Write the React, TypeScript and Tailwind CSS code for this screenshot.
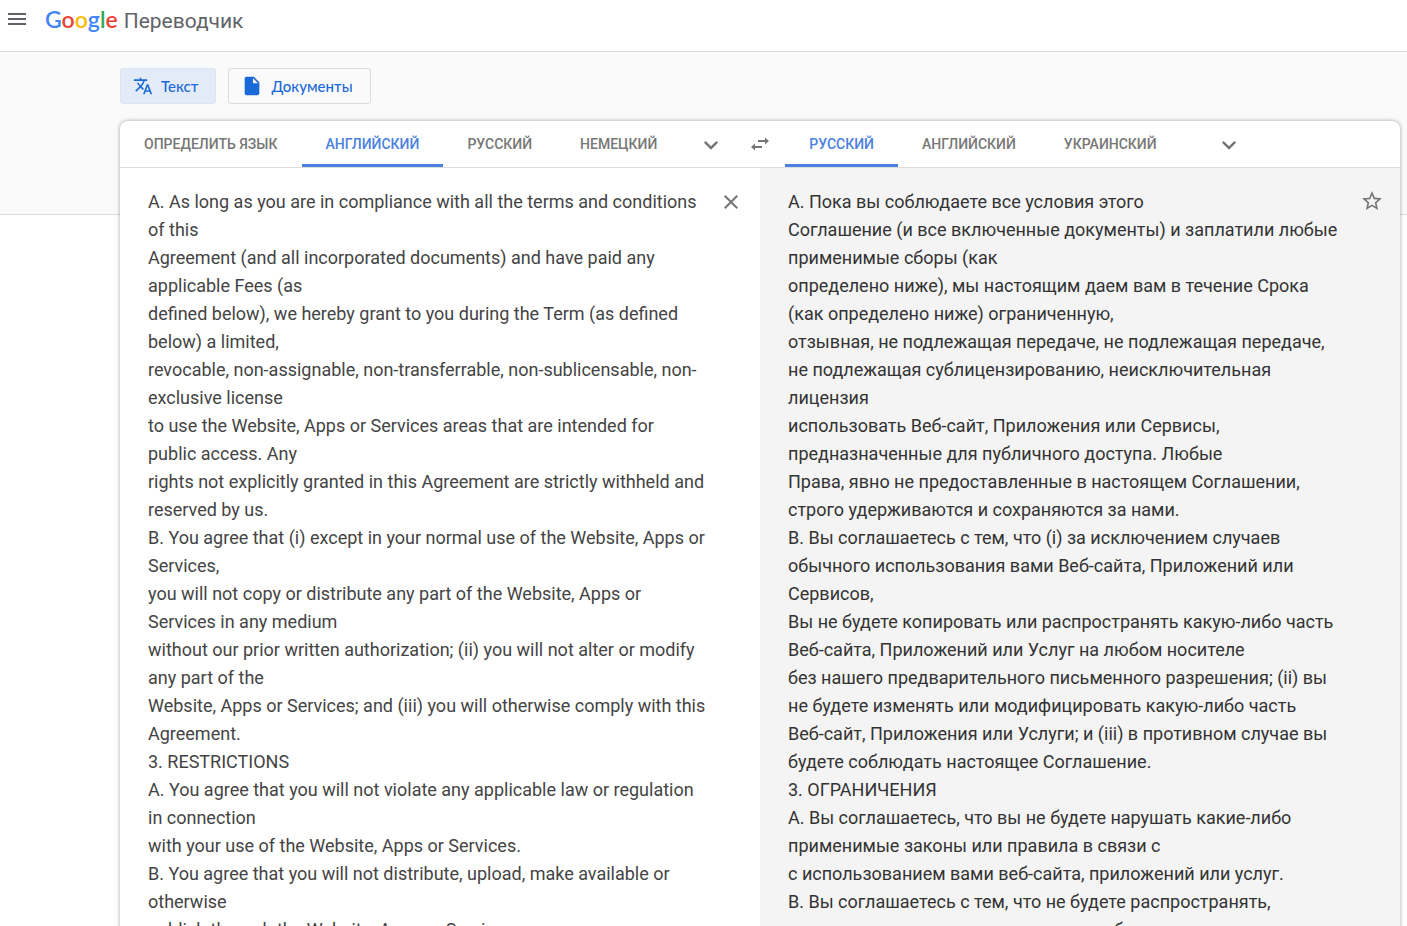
import React from "react";
import { MdMenu, MdTranslate, MdInsertDriveFile, MdExpandMore, MdClose, MdStarBorder } from "react-icons/md";

const logo = [
  { letter: "G", color: "text-[#4285f4]" },
  { letter: "o", color: "text-[#ea4335]" },
  { letter: "o", color: "text-[#fbbc05]" },
  { letter: "g", color: "text-[#4285f4]" },
  { letter: "l", color: "text-[#34a853]" },
  { letter: "e", color: "text-[#ea4335]" },
];

const sourceText = `A. As long as you are in compliance with all the terms and conditions of this
Agreement (and all incorporated documents) and have paid any applicable Fees (as
defined below), we hereby grant to you during the Term (as defined below) a limited,
revocable, non-assignable, non-transferrable, non-sublicensable, non-exclusive license
to use the Website, Apps or Services areas that are intended for public access. Any
rights not explicitly granted in this Agreement are strictly withheld and reserved by us.
B. You agree that (i) except in your normal use of the Website, Apps or Services,
you will not copy or distribute any part of the Website, Apps or Services in any medium
without our prior written authorization; (ii) you will not alter or modify any part of the
Website, Apps or Services; and (iii) you will otherwise comply with this Agreement.
3. RESTRICTIONS
A. You agree that you will not violate any applicable law or regulation in connection
with your use of the Website, Apps or Services.
B. You agree that you will not distribute, upload, make available or otherwise
publish through the Website, Apps or Services`;

const translatedText = `А. Пока вы соблюдаете все условия этого
Соглашение (и все включенные документы) и заплатили любые применимые сборы (как
определено ниже), мы настоящим даем вам в течение Срока (как определено ниже) ограниченную,
отзывная, не подлежащая передаче, не подлежащая передаче, не подлежащая сублицензированию, неисключительная лицензия
использовать Веб-сайт, Приложения или Сервисы, предназначенные для публичного доступа. Любые
Права, явно не предоставленные в настоящем Соглашении, строго удерживаются и сохраняются за нами.
B. Вы соглашаетесь с тем, что (i) за исключением случаев обычного использования вами Веб-сайта, Приложений или Сервисов,
Вы не будете копировать или распространять какую-либо часть Веб-сайта, Приложений или Услуг на любом носителе
без нашего предварительного письменного разрешения; (ii) вы не будете изменять или модифицировать какую-либо часть
Веб-сайт, Приложения или Услуги; и (iii) в противном случае вы будете соблюдать настоящее Соглашение.
3. ОГРАНИЧЕНИЯ
А. Вы соглашаетесь, что вы не будете нарушать какие-либо применимые законы или правила в связи с
с использованием вами веб-сайта, приложений или услуг.
B. Вы соглашаетесь с тем, что не будете распространять, загружать, предоставлять или иным образом`;

function Tab({ label, active = false }: { label: string; active?: boolean }) {
  return (
    <button
      type="button"
      role="tab"
      aria-selected={active}
      className={
        active
          ? "h-full border-b-3 border-[#4a80e0] px-6 pt-[3px] text-[#4a80e0]"
          : "h-full border-b-3 border-transparent px-6 pt-[3px] text-[#777]"
      }
    >
      {label}
    </button>
  );
}

function SwapIcon() {
  return (
    <svg width="18" height="14" viewBox="0 0 18 14" fill="currentColor" aria-hidden="true">
      <path d="M7 3h7V0.6L18 4l-4 3.4V5H7z" />
      <path d="M11 9H4V6.6L0 10l4 3.4V11h7z" />
    </svg>
  );
}

export default function App() {
  return (
    <div className="h-screen overflow-hidden bg-white font-['Roboto','Noto_Sans',sans-serif]">
      <header className="flex h-[51px] items-start pl-[5px] pt-[7px] text-[#5f6368]">
        <button type="button" aria-label="Главное меню" className="size-6">
          <MdMenu size={24} />
        </button>
        <a href="#" className="-mt-px ml-4 flex items-baseline gap-[6px] text-[21px] leading-[26px]">
          <span className="font-['Lato','Noto_Sans',sans-serif] text-[23px] leading-[26px] font-semibold">
            {logo.map((item, i) => (
              <span key={i} className={item.color}>{item.letter}</span>
            ))}
          </span>
          <span>Переводчик</span>
        </a>
      </header>

      <section className="h-[164px] border-y border-[#dcdcdc] bg-[#fafafa] pl-[120px] pt-4">
        <nav className="flex gap-3 font-['Lato','Noto_Sans',sans-serif] text-[15px] font-medium text-[#1a69d8]">
          <button type="button" className="flex h-9 items-center gap-2 rounded-[3px] border border-[#dbe5f6] bg-[#e3ebf8] pr-[17px] pl-3">
            <MdTranslate size={20} />
            Текст
          </button>
          <button type="button" className="flex h-9 items-center gap-2 rounded-[3px] border border-[#dadce0] bg-[#fafafa] pr-[17px] pl-3">
            <MdInsertDriveFile size={22} />
            Документы
          </button>
        </nav>
      </section>

      <main className="relative -mt-[94px] mr-[7px] ml-[120px] rounded-t-lg bg-white shadow-[0_0_4px_rgba(0,0,0,0.35)]">
        <div className="flex h-[47px] border-b border-[#dcdcdc] text-sm font-medium">
          <div role="tablist" aria-label="Исходный язык" className="flex">
            <Tab label="ОПРЕДЕЛИТЬ ЯЗЫК" />
            <Tab label="АНГЛИЙСКИЙ" active />
            <Tab label="РУССКИЙ" />
            <Tab label="НЕМЕЦКИЙ" />
          </div>
          <button type="button" aria-label="Другие языки оригинала" className="flex w-[60px] items-center justify-center pt-[2px] text-[#757575]">
            <MdExpandMore size={28} />
          </button>
          <button type="button" aria-label="Поменять языки местами" className="flex w-11 items-center pl-[10px] text-[#757575]">
            <SwapIcon />
          </button>
          <div role="tablist" aria-label="Язык перевода" className="flex">
            <Tab label="РУССКИЙ" active />
            <Tab label="АНГЛИЙСКИЙ" />
            <Tab label="УКРАИНСКИЙ" />
          </div>
          <button type="button" aria-label="Другие языки перевода" className="ml-6 flex w-12 items-center justify-center pt-[2px] text-[#757575]">
            <MdExpandMore size={28} />
          </button>
        </div>
        <div className="grid grid-cols-2 text-lg leading-7">
          <div className="flex items-start pt-5 pr-[17px] pl-7">
            <textarea
              aria-label="Исходный текст"
              rows={30}
              defaultValue={sourceText}
              className="min-w-0 flex-1 resize-none overflow-hidden text-[#444] outline-none"
            />
            <button type="button" aria-label="Очистить" className="mt-[2px] ml-[13px] text-[#757575]">
              <MdClose size={24} />
            </button>
          </div>
          <div className="flex items-start bg-[#f4f4f4] pt-5 pr-4 pl-7 text-[#333]">
            <p className="min-w-0 flex-1 pr-4 whitespace-pre-line">{translatedText}</p>
            <button type="button" aria-label="Сохранить перевод" className="mt-px text-[#757575]">
              <MdStarBorder size={24} />
            </button>
          </div>
        </div>
      </main>
    </div>
  );
}
